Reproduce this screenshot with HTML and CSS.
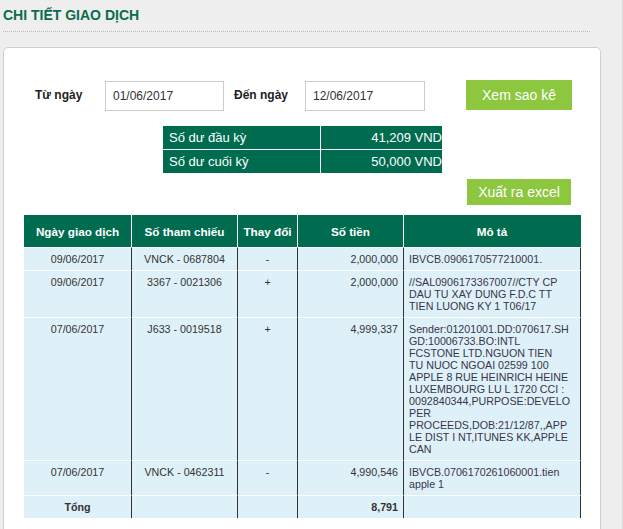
FILE: index.html
```html
<!DOCTYPE html>
<html lang="vi">
<head>
<meta charset="utf-8">
<title>Chi tiết giao dịch</title>
<link rel="stylesheet" href="styles.css">
</head>
<body>
<div class="page">
  <div class="title-bar">
    <h1 class="title">CHI TIẾT GIAO DỊCH</h1>
  </div>
  <div class="panel">
    <div class="filter">
      <label class="lbl lbl-from">Từ ngày</label>
      <input class="date-input" type="text" value="01/06/2017">
      <label class="lbl lbl-to">Đến ngày</label>
      <input class="date-input date-input-to" type="text" value="12/06/2017">
      <button class="btn btn-view" type="button">Xem sao kê</button>
    </div>
    <table class="balance">
      <tr>
        <td class="bal-label bal-first">Số dư đầu kỳ</td>
        <td class="bal-value bal-first">41,209 VND</td>
      </tr>
      <tr>
        <td class="bal-label">Số dư cuối kỳ</td>
        <td class="bal-value">50,000 VND</td>
      </tr>
    </table>
    <div class="export-row">
      <button class="btn btn-export" type="button">Xuất ra excel</button>
    </div>
    <table class="tx">
      <thead>
        <tr>
          <th class="c-date">Ngày giao dịch</th>
          <th class="c-ref">Số tham chiếu</th>
          <th class="c-chg">Thay đổi</th>
          <th class="c-amt">Số tiền</th>
          <th class="c-desc">Mô tả</th>
        </tr>
      </thead>
      <tbody>
        <tr>
          <td class="center">09/06/2017</td>
          <td class="center">VNCK - 0687804</td>
          <td class="center">-</td>
          <td class="right">2,000,000</td>
          <td class="desc">IBVCB.0906170577210001.</td>
        </tr>
        <tr>
          <td class="center">09/06/2017</td>
          <td class="center">3367 - 0021306</td>
          <td class="center">+</td>
          <td class="right">2,000,000</td>
          <td class="desc">//SAL0906173367007//CTY CP<br>DAU TU XAY DUNG F.D.C TT<br>TIEN LUONG KY 1 T06/17</td>
        </tr>
        <tr>
          <td class="center">07/06/2017</td>
          <td class="center">J633 - 0019518</td>
          <td class="center">+</td>
          <td class="right">4,999,337</td>
          <td class="desc">Sender:01201001.DD:070617.SH<br>GD:10006733.BO:INTL<br>FCSTONE LTD.NGUON TIEN<br>TU NUOC NGOAI 02599 100<br>APPLE 8 RUE HEINRICH HEINE<br>LUXEMBOURG LU L 1720 CCI :<br>0092840344,PURPOSE:DEVELO<br>PER<br>PROCEEDS,DOB:21/12/87,,APP<br>LE DIST I NT,ITUNES KK,APPLE<br>CAN</td>
        </tr>
        <tr>
          <td class="center">07/06/2017</td>
          <td class="center">VNCK - 0462311</td>
          <td class="center">-</td>
          <td class="right">4,990,546</td>
          <td class="desc">IBVCB.0706170261060001.tien<br>apple 1</td>
        </tr>
        <tr class="total">
          <td class="center">Tổng</td>
          <td></td>
          <td></td>
          <td class="right">8,791</td>
          <td></td>
        </tr>
      </tbody>
    </table>
  </div>
</div>
</body>
</html>
```
FILE: styles.css
```css
html, body {
  margin: 0;
  padding: 0;
  background: #eeeeee;
}

body {
  font-family: "Liberation Sans", Arial, sans-serif;
  color: #333;
}

.page {
  width: 623px;
  min-height: 529px;
  box-sizing: border-box;
  border-right: 1px solid #d9d9d9;
  overflow: hidden;
}

.title-bar {
  margin-left: 3px;
  width: 587px;
  padding: 7px 0 8px;
  border-bottom: 1px dotted #b9b9b9;
}

.title {
  margin: 0;
  font-size: 14px;
  line-height: 16px;
  font-weight: bold;
  color: #0b6b4e;
}

.panel {
  margin: 15px 0 0 3px;
  width: 598px;
  box-sizing: border-box;
  background: #fff;
  border: 1px solid #cfcfcf;
  border-radius: 5px;
  padding-bottom: 30px;
}

.filter {
  display: flex;
  align-items: flex-start;
  padding: 33px 0 0 31px;
}

.lbl {
  font-size: 12px;
  font-weight: bold;
  line-height: 29px;
  color: #222;
}

.lbl-from {
  width: 70px;
}

.lbl-to {
  margin-left: 10px;
  width: 71px;
}

.date-input {
  width: 119px;
  height: 30px;
  box-sizing: border-box;
  border: 1px solid #cccccc;
  padding: 0 7px;
  margin: 0;
  font-family: "Liberation Sans", Arial, sans-serif;
  font-size: 12px;
  color: #333;
  background: #fff;
  outline: none;
}

.date-input-to {
  width: 120px;
}

.btn {
  border: none;
  margin: 0;
  padding: 0;
  background: #8dc63f;
  color: #fff;
  font-family: "Liberation Sans", Arial, sans-serif;
  font-size: 14px;
  cursor: pointer;
}

.btn-view {
  margin-left: 41px;
  margin-top: -1px;
  width: 106px;
  height: 30px;
}

.balance {
  margin: 15px 0 0 159px;
  border-collapse: separate;
  border-spacing: 0;
  width: 279px;
  table-layout: fixed;
}

.balance td {
  background: #006c4f;
  color: #fff;
  font-size: 13px;
  height: 23px;
  padding: 0;
  box-sizing: border-box;
  line-height: 15px;
}

.bal-label {
  width: 158px;
  padding-left: 6px !important;
  border-right: 1px solid #fff;
}

.bal-value {
  text-align: right;
}

.bal-first {
  border-bottom: 1px solid #fff;
  height: 24px !important;
}

.export-row {
  display: flex;
  justify-content: flex-end;
  margin-top: 6px;
  padding-right: 29px;
}

.btn-export {
  width: 104px;
  height: 26px;
}

.tx {
  margin: 10px 0 0 20px;
  width: 557px;
  table-layout: fixed;
  border-collapse: separate;
  border-spacing: 0;
}

.tx th {
  box-sizing: border-box;
  height: 32px;
  padding: 0;
  background: #006c4f;
  color: #fff;
  font-size: 11.7px;
  font-weight: bold;
  text-align: center;
  border-right: 1px solid #fff;
}

.tx th.c-desc {
  border-right-color: #006c4f;
}

.c-date { width: 108px; }
.c-ref { width: 106px; }
.c-chg { width: 60px; }
.c-amt { width: 106px; }
.c-desc { width: 177px; }

.tx td {
  box-sizing: border-box;
  background: #dff1f8;
  border-top: 1px solid #fff;
  border-right: 1px solid #333;
  padding: 5px;
  font-size: 10.7px;
  line-height: 12px;
  color: #333;
  vertical-align: top;
  white-space: nowrap;
}

.tx td.center {
  text-align: center;
}

.tx td.right {
  text-align: right;
}

.tx td.desc {
  text-align: left;
  color: #3a3448;
}

.tx tr.total td {
  font-weight: bold;
  color: #333;
}
```
